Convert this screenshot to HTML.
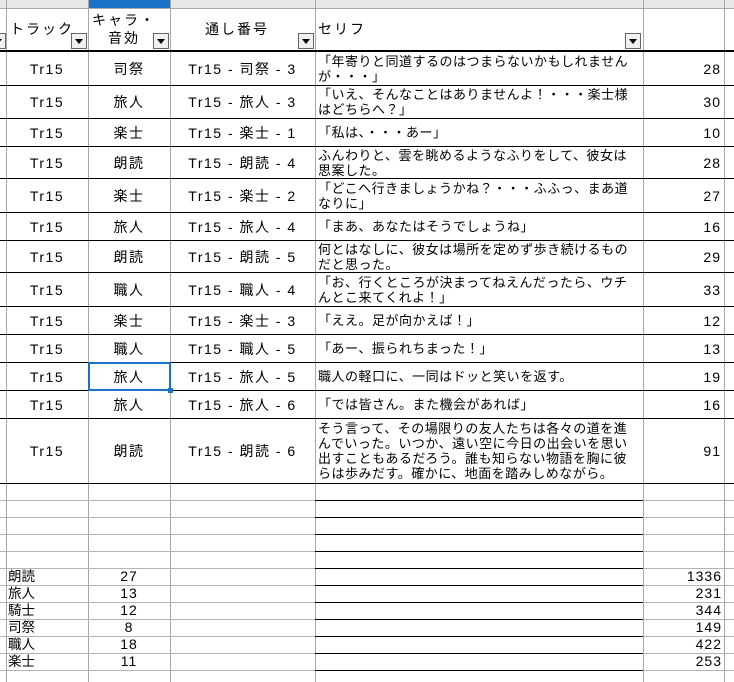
<!DOCTYPE html>
<html><head><meta charset="utf-8"><style>
*{margin:0;padding:0;box-sizing:border-box}
body{width:734px;height:682px;overflow:hidden;background:#fff;font-family:"Liberation Sans","Noto Sans CJK JP",sans-serif;font-size:13px;color:#000;position:relative}
.a{position:absolute}
.v{position:absolute;top:0;width:1px;height:682px;background:#a8a8a8}
.h{position:absolute;left:0;width:734px;height:1px;background:#000}
.g{position:absolute;height:1px;background:#b4b4b4}
.c{position:absolute;display:flex;align-items:center;justify-content:center;white-space:nowrap;letter-spacing:1.5px;font-size:14px}
.t{position:absolute;left:318px;white-space:nowrap;font-size:13px;letter-spacing:0.5px;line-height:15px;display:flex;flex-direction:column;justify-content:center}
.n{position:absolute;left:645px;width:76px;text-align:right;display:flex;align-items:center;justify-content:flex-end;letter-spacing:1px;font-size:14px}
.f{position:absolute;width:16px;height:16px;background:#f0f0f0;border:1px solid #666}
.f:after{content:"";position:absolute;left:3px;top:5px;border-left:4px solid transparent;border-right:4px solid transparent;border-top:5px solid #000}
</style></head><body>
<div class="a" style="left:0;top:0;width:734px;height:8px;background:#e8e8e8"></div>
<div class="a" style="left:88px;top:0;width:82px;height:8px;background:#1a73c8"></div>
<div class="a" style="left:0;top:8px;width:734px;height:1px;background:#aaa"></div>

<div class="v" style="left:6px"></div>
<div class="v" style="left:88px"></div>
<div class="v" style="left:170px"></div>
<div class="v" style="left:315px"></div>
<div class="v" style="left:643px"></div>
<div class="v" style="left:724px"></div>

<!-- header -->
<div class="a" style="left:10px;top:19px;letter-spacing:2px;font-size:14px;white-space:nowrap">トラック</div>
<div class="a" style="left:92px;top:11px;letter-spacing:2px;font-size:14px;line-height:18px;text-align:center;width:64px;white-space:nowrap">キャラ・<br>音効</div>
<div class="a" style="left:205px;top:19px;letter-spacing:2px;font-size:14px;white-space:nowrap">通し番号</div>
<div class="a" style="left:318px;top:19px;letter-spacing:2px;font-size:14px;white-space:nowrap">セリフ</div>
<div class="f" style="left:-10px;top:33px"></div>
<div class="f" style="left:71px;top:33px"></div>
<div class="f" style="left:153px;top:33px"></div>
<div class="f" style="left:298px;top:33px"></div>
<div class="f" style="left:625px;top:33px"></div>
<div class="a" style="left:0;top:50px;width:734px;height:2px;background:#000"></div>

<!-- row lines -->
<div class="h" style="top:85px"></div><div class="h" style="top:118px"></div><div class="h" style="top:146px"></div><div class="h" style="top:178px"></div><div class="h" style="top:212px"></div><div class="h" style="top:240px"></div><div class="h" style="top:272px"></div><div class="h" style="top:306px"></div><div class="h" style="top:334px"></div><div class="h" style="top:362px"></div><div class="h" style="top:390px"></div><div class="h" style="top:418px"></div><div class="h" style="top:483px"></div>

<!-- empty/summary row lines -->
<div class="g" style="top:500px;left:0;width:315px"></div><div class="h" style="top:500px;left:315px;width:328px"></div><div class="g" style="top:500px;left:643px;width:91px"></div>
<div class="g" style="top:517px;left:0;width:315px"></div><div class="h" style="top:517px;left:315px;width:328px"></div><div class="g" style="top:517px;left:643px;width:91px"></div>
<div class="g" style="top:534px;left:0;width:315px"></div><div class="h" style="top:534px;left:315px;width:328px"></div><div class="g" style="top:534px;left:643px;width:91px"></div>
<div class="g" style="top:551px;left:0;width:315px"></div><div class="h" style="top:551px;left:315px;width:328px"></div><div class="g" style="top:551px;left:643px;width:91px"></div>
<div class="g" style="top:568px;left:0;width:315px"></div><div class="h" style="top:568px;left:315px;width:328px"></div><div class="g" style="top:568px;left:643px;width:91px"></div>
<div class="g" style="top:585px;left:0;width:315px"></div><div class="h" style="top:585px;left:315px;width:328px"></div><div class="g" style="top:585px;left:643px;width:91px"></div>
<div class="g" style="top:602px;left:0;width:315px"></div><div class="h" style="top:602px;left:315px;width:328px"></div><div class="g" style="top:602px;left:643px;width:91px"></div>
<div class="g" style="top:619px;left:0;width:315px"></div><div class="h" style="top:619px;left:315px;width:328px"></div><div class="g" style="top:619px;left:643px;width:91px"></div>
<div class="g" style="top:636px;left:0;width:315px"></div><div class="h" style="top:636px;left:315px;width:328px"></div><div class="g" style="top:636px;left:643px;width:91px"></div>
<div class="g" style="top:653px;left:0;width:315px"></div><div class="h" style="top:653px;left:315px;width:328px"></div><div class="g" style="top:653px;left:643px;width:91px"></div>
<div class="g" style="top:670px;left:0;width:315px"></div><div class="h" style="top:670px;left:315px;width:328px"></div><div class="g" style="top:670px;left:643px;width:91px"></div>

<!-- data rows -->
<div class="c" style="left:6px;width:82px;top:52px;height:33px">Tr15</div><div class="c" style="left:88px;width:82px;top:52px;height:33px">司祭</div><div class="c" style="left:170px;width:145px;top:52px;height:33px">Tr15 - 司祭 - 3</div><div class="t" style="top:52px;height:33px"><span>「年寄りと同道するのはつまらないかもしれません</span><span>が・・・」</span></div><div class="n" style="top:52px;height:33px">28</div>

<div class="c" style="left:6px;width:82px;top:86px;height:32px">Tr15</div><div class="c" style="left:88px;width:82px;top:86px;height:32px">旅人</div><div class="c" style="left:170px;width:145px;top:86px;height:32px">Tr15 - 旅人 - 3</div><div class="t" style="top:86px;height:32px"><span>「いえ、そんなことはありませんよ！・・・楽士様</span><span>はどちらへ？」</span></div><div class="n" style="top:86px;height:32px">30</div>

<div class="c" style="left:6px;width:82px;top:119px;height:27px">Tr15</div><div class="c" style="left:88px;width:82px;top:119px;height:27px">楽士</div><div class="c" style="left:170px;width:145px;top:119px;height:27px">Tr15 - 楽士 - 1</div><div class="t" style="top:119px;height:27px"><span>「私は、・・・あー」</span></div><div class="n" style="top:119px;height:27px">10</div>

<div class="c" style="left:6px;width:82px;top:147px;height:31px">Tr15</div><div class="c" style="left:88px;width:82px;top:147px;height:31px">朗読</div><div class="c" style="left:170px;width:145px;top:147px;height:31px">Tr15 - 朗読 - 4</div><div class="t" style="top:147px;height:31px"><span>ふんわりと、雲を眺めるようなふりをして、彼女は</span><span>思案した。</span></div><div class="n" style="top:147px;height:31px">28</div>

<div class="c" style="left:6px;width:82px;top:179px;height:33px">Tr15</div><div class="c" style="left:88px;width:82px;top:179px;height:33px">楽士</div><div class="c" style="left:170px;width:145px;top:179px;height:33px">Tr15 - 楽士 - 2</div><div class="t" style="top:179px;height:33px"><span>「どこへ行きましょうかね？・・・ふふっ、まあ道</span><span>なりに」</span></div><div class="n" style="top:179px;height:33px">27</div>

<div class="c" style="left:6px;width:82px;top:213px;height:27px">Tr15</div><div class="c" style="left:88px;width:82px;top:213px;height:27px">旅人</div><div class="c" style="left:170px;width:145px;top:213px;height:27px">Tr15 - 旅人 - 4</div><div class="t" style="top:213px;height:27px"><span>「まあ、あなたはそうでしょうね」</span></div><div class="n" style="top:213px;height:27px">16</div>

<div class="c" style="left:6px;width:82px;top:241px;height:31px">Tr15</div><div class="c" style="left:88px;width:82px;top:241px;height:31px">朗読</div><div class="c" style="left:170px;width:145px;top:241px;height:31px">Tr15 - 朗読 - 5</div><div class="t" style="top:241px;height:31px"><span>何とはなしに、彼女は場所を定めず歩き続けるもの</span><span>だと思った。</span></div><div class="n" style="top:241px;height:31px">29</div>

<div class="c" style="left:6px;width:82px;top:273px;height:33px">Tr15</div><div class="c" style="left:88px;width:82px;top:273px;height:33px">職人</div><div class="c" style="left:170px;width:145px;top:273px;height:33px">Tr15 - 職人 - 4</div><div class="t" style="top:273px;height:33px"><span>「お、行くところが決まってねえんだったら、ウチ</span><span>んとこ来てくれよ！」</span></div><div class="n" style="top:273px;height:33px">33</div>

<div class="c" style="left:6px;width:82px;top:307px;height:27px">Tr15</div><div class="c" style="left:88px;width:82px;top:307px;height:27px">楽士</div><div class="c" style="left:170px;width:145px;top:307px;height:27px">Tr15 - 楽士 - 3</div><div class="t" style="top:307px;height:27px"><span>「ええ。足が向かえば！」</span></div><div class="n" style="top:307px;height:27px">12</div>

<div class="c" style="left:6px;width:82px;top:335px;height:27px">Tr15</div><div class="c" style="left:88px;width:82px;top:335px;height:27px">職人</div><div class="c" style="left:170px;width:145px;top:335px;height:27px">Tr15 - 職人 - 5</div><div class="t" style="top:335px;height:27px"><span>「あー、振られちまった！」</span></div><div class="n" style="top:335px;height:27px">13</div>

<div class="c" style="left:6px;width:82px;top:363px;height:27px">Tr15</div><div class="c" style="left:88px;width:82px;top:363px;height:27px">旅人</div><div class="c" style="left:170px;width:145px;top:363px;height:27px">Tr15 - 旅人 - 5</div><div class="t" style="top:363px;height:27px"><span>職人の軽口に、一同はドッと笑いを返す。</span></div><div class="n" style="top:363px;height:27px">19</div>

<div class="c" style="left:6px;width:82px;top:391px;height:27px">Tr15</div><div class="c" style="left:88px;width:82px;top:391px;height:27px">旅人</div><div class="c" style="left:170px;width:145px;top:391px;height:27px">Tr15 - 旅人 - 6</div><div class="t" style="top:391px;height:27px"><span>「では皆さん。また機会があれば」</span></div><div class="n" style="top:391px;height:27px">16</div>

<div class="c" style="left:6px;width:82px;top:419px;height:64px">Tr15</div><div class="c" style="left:88px;width:82px;top:419px;height:64px">朗読</div><div class="c" style="left:170px;width:145px;top:419px;height:64px">Tr15 - 朗読 - 6</div><div class="t" style="top:419px;height:64px"><span>そう言って、その場限りの友人たちは各々の道を進</span><span>んでいった。いつか、遠い空に今日の出会いを思い</span><span>出すこともあるだろう。誰も知らない物語を胸に彼</span><span>らは歩みだす。確かに、地面を踏みしめながら。</span></div><div class="n" style="top:419px;height:64px">91</div>

<!-- selection -->
<div class="a" style="left:88px;top:362px;width:83px;height:29px;border:2px solid #1a73c8"></div>
<div class="a" style="left:168px;top:388px;width:5px;height:5px;background:#1a73c8"></div>

<!-- summary -->
<div class="a" style="left:8px;top:568px;line-height:17px;font-size:13.5px">朗読<br>旅人<br>騎士<br>司祭<br>職人<br>楽士</div>
<div class="a" style="left:88px;width:82px;top:568px;line-height:17px;text-align:center;letter-spacing:1px;font-size:14px">27<br>13<br>12<br>8<br>18<br>11</div>
<div class="a" style="left:645px;width:77px;top:568px;line-height:17px;text-align:right;letter-spacing:1px;font-size:14px">1336<br>231<br>344<br>149<br>422<br>253</div>
</body></html>
